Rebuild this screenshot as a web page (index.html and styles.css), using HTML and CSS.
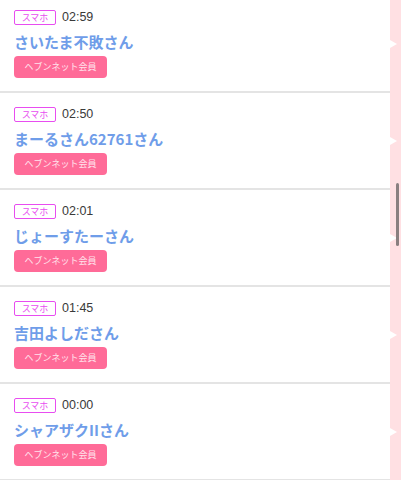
FILE: index.html
```html
<!DOCTYPE html>
<html lang="ja">
<head>
<meta charset="utf-8">
<link rel="stylesheet" href="styles.css">
</head>
<body>
<div class="page">
  <ul class="list">
    <li class="item">
      <div class="meta"><span class="tag">スマホ</span><span class="time">02:59</span></div>
      <div class="name">さいたま不敗さん</div>
      <span class="badge">ヘブンネット会員</span>
    </li>
    <li class="item">
      <div class="meta"><span class="tag">スマホ</span><span class="time">02:50</span></div>
      <div class="name">まーるさん62761さん</div>
      <span class="badge">ヘブンネット会員</span>
    </li>
    <li class="item">
      <div class="meta"><span class="tag">スマホ</span><span class="time">02:01</span></div>
      <div class="name">じょーすたーさん</div>
      <span class="badge">ヘブンネット会員</span>
    </li>
    <li class="item">
      <div class="meta"><span class="tag">スマホ</span><span class="time">01:45</span></div>
      <div class="name">吉田よしださん</div>
      <span class="badge">ヘブンネット会員</span>
    </li>
    <li class="item">
      <div class="meta"><span class="tag">スマホ</span><span class="time">00:00</span></div>
      <div class="name">シャアザクIIさん</div>
      <span class="badge">ヘブンネット会員</span>
    </li>
  </ul>
  <div class="strip">
    <div class="seg"></div>
    <div class="seg"></div>
    <div class="seg"></div>
    <div class="seg"></div>
    <div class="seg"></div>
    <div class="scrollbar"></div>
  </div>
</div>
</body>
</html>
```
FILE: styles.css
```css
html, body {
  margin: 0;
  padding: 0;
  background: #ffffff;
  overflow: hidden;
}
body {
  font-family: "Noto Sans CJK JP", "Noto Sans", sans-serif;
  width: 401px;
  height: 480px;
}
.page {
  display: flex;
  height: 480px;
  overflow: hidden;
  position: relative;
}
.list {
  list-style: none;
  margin: -4px 0 0 0;
  padding: 0;
  flex: 1;
}
.item {
  display: flex;
  flex-direction: column;
  align-items: flex-start;
  padding: 14px 0 13px 14px;
  border-bottom: 2px solid #e4e4e4;
}
.meta {
  display: flex;
  align-items: center;
  height: 15px;
}
.tag {
  box-sizing: border-box;
  height: 15px;
  width: 42px;
  border: 1px solid #e84df0;
  border-radius: 2px;
  color: #e84df0;
  font-size: 9px;
  line-height: 13px;
  text-align: center;
}
.time {
  margin-left: 6px;
  font-family: "Liberation Sans", sans-serif;
  font-size: 12.5px;
  color: #3a3a3a;
  line-height: 15px;
}
.name {
  margin-top: 7px;
  height: 20px;
  line-height: 20px;
  font-size: 15px;
  font-weight: 700;
  color: #6f9de9;
}
.badge {
  margin-top: 4px;
  box-sizing: border-box;
  height: 22px;
  width: 93px;
  border-radius: 4px;
  background: #ff6b98;
  color: #ffe3ec;
  font-size: 9px;
  line-height: 22px;
  text-align: center;
}
.strip {
  width: 11px;
  background: #ffe0e3;
  display: flex;
  flex-direction: column;
  margin-top: -4px;
}
.seg {
  height: 97px;
  flex: none;
}
.seg::before {
  content: "";
  display: block;
  margin-top: 44px;
  width: 0;
  height: 0;
  border-left: 7px solid #ffffff;
  border-top: 4.5px solid transparent;
  border-bottom: 4.5px solid transparent;
}
.scrollbar {
  position: absolute;
  right: 2px;
  top: 183px;
  width: 3px;
  height: 63px;
  border-radius: 1.5px;
  background: #8a7f80;
}
```
